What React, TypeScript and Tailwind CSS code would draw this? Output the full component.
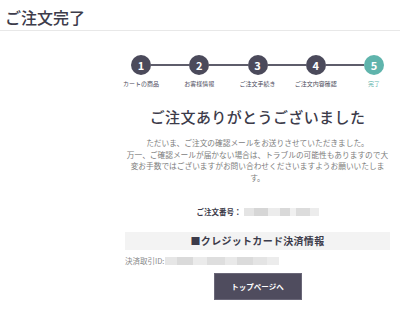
import React from "react";

const steps = ["カートの商品", "お客様情報", "ご注文手続き", "ご注文内容確認", "完了"];

// blurred placeholder for masked values
function Masked({ widths }: { widths: { w: number; c: string }[] }) {
  return (
    <span className="inline-flex h-[8px]">
      {widths.map((b, i) => (
        <span key={i} className="h-full" style={{ width: b.w, background: b.c }} />
      ))}
    </span>
  );
}

export default function App() {
  return (
    <div className="w-[400px] h-[309px] bg-white overflow-hidden font-['Noto_Sans_CJK_JP',sans-serif]">
      {/* Header */}
      <div className="h-[31px] px-[5px] pt-[3px] flex items-center border-b border-[#e8e8e8] text-[16px] font-medium text-[#3d3c4b]">
        ご注文完了
      </div>

      <div className="ml-[125px] w-[265px]">
        {/* steps */}
        <div className="mt-[24px] flex items-start px-[6px]">
          {steps.map((s, i) => (
            <React.Fragment key={s}>
              {i > 0 && <div className="flex-1 h-[2px] mt-[9px] bg-[#5e5d6b]" />}
              <div className="w-[20px] flex flex-col items-center">
                <div
                  className={
                    "w-[20px] h-[20px] rounded-full flex items-center justify-center text-white text-[11px] font-bold " +
                    (i === 4 ? "bg-[#5fb4ac]" : "bg-[#4b4a5b]")
                  }
                >
                  {i + 1}
                </div>
                <div
                  className={
                    "mt-[4px] whitespace-nowrap text-[6px] leading-[9px] " +
                    (i === 4 ? "text-[#5fb4ac]" : "text-[#4b4a5b]")
                  }
                >
                  {s}
                </div>
              </div>
            </React.Fragment>
          ))}
        </div>

        {/* heading */}
        <h1 className="mt-[19px] text-center text-[15px] leading-[20px] font-medium tracking-[0.4px] text-[#3c3b4a]">
          ご注文ありがとうございました
        </h1>

        {/* message */}
        <p className="mt-[10px] text-center text-[7.7px] leading-[11.7px] text-[#7d7d7d]">
          ただいま、ご注文の確認メールをお送りさせていただきました。
          <br />
          万一、ご確認メールが届かない場合は、トラブルの可能性もありますので大変お手数ではございますがお問い合わせくださいますようお願いいたします。
        </p>

        {/* order number */}
        <div className="mt-[22px] h-[12px] flex items-center justify-center text-[7.5px] font-bold text-[#3c3b4a]">
          <span className="mr-[2px]">ご注文番号：</span>
          <Masked
            widths={[
              { w: 10, c: "#e4e4e4" },
              { w: 14, c: "#d6d6d6" },
              { w: 12, c: "#ececec" },
              { w: 10, c: "#d9d9d9" },
              { w: 6, c: "#f0f0f0" },
              { w: 14, c: "#dcdcdc" },
              { w: 9, c: "#ececec" },
            ]}
          />
        </div>

        {/* credit card */}
        <div className="mt-[14px] h-[18px] bg-[#f3f3f3] flex items-center justify-center text-[10px] font-bold tracking-[0.3px] text-[#3c3b4a]">
          ■クレジットカード決済情報
        </div>

        <div className="mt-[5px] h-[12px] flex items-center text-[7.5px] text-[#8a8a8a]">
          <span className="mr-[1px]">決済取引ID:</span>
          <Masked
            widths={[
              { w: 12, c: "#e6e6e6" },
              { w: 16, c: "#dadada" },
              { w: 14, c: "#ebebeb" },
              { w: 18, c: "#dedede" },
              { w: 12, c: "#e9e9e9" },
              { w: 16, c: "#dbdbdb" },
              { w: 14, c: "#e4e4e4" },
              { w: 12, c: "#ececec" },
            ]}
          />
        </div>

        {/* button */}
        <div className="mt-[6px] flex justify-center">
          <button className="w-[88px] h-[27px] bg-[#4f4c5e] border border-[#6a6778] text-white text-[7.5px] font-bold">
            トップページへ
          </button>
        </div>
      </div>
    </div>
  );
}
